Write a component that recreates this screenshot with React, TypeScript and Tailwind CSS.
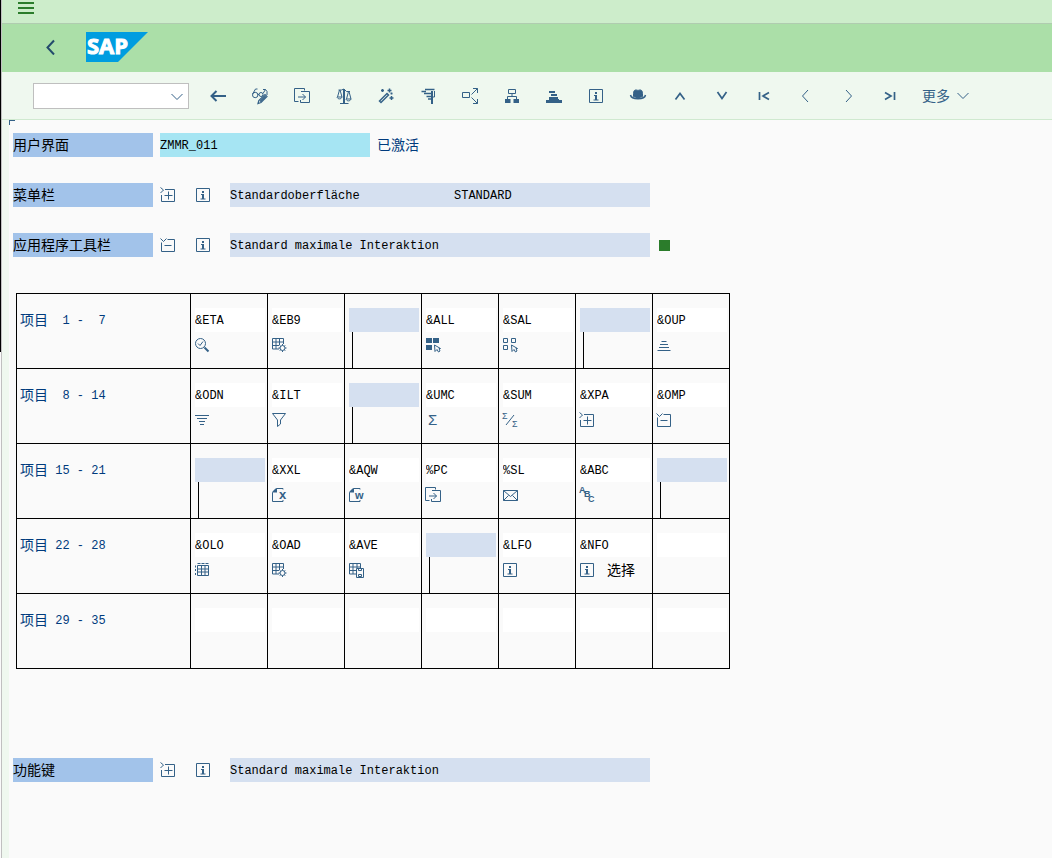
import React from 'react';

type IconName = keyof typeof icons;

// All icons are drawn on a 16x16 grid
const icons = {
  back: <path d="M16 8H1.5M6.5 3 1.5 8l5 5" strokeWidth="2" />,
  display: (
    <>
      <circle cx="3.2" cy="7" r="2.700" />
      <circle cx="9" cy="6.500" r="2" />
      <path d="M.6 6 3.500 1h2M5.900 6.500h1.200M11 5.500l2.500-4M13.500 1.500h-2.500M15 7V3.500l-1.500-2" />
      <path d="m6 15.500.8-3L13 6.500l2 2-6 6zM8 13.500 14 7.500" strokeWidth="1.200" />
    </>
  ),
  transfer: <path d="M4.500 13.500h-4V.5h10v2M7 3.500h8.500v11h-9v-2.500M4 9h7.500M8.500 6l3 3-3 3" />,
  scales: (
    <>
      <path d="M8 1v14" strokeWidth="2" />
      <path d="M4 15.500h8.500M2.500 2h3L8 1l2.500 2.500H14M3.500 2 1.500 9h4.500L4 2M12.500 3.500 10.500 11H15l-2-7.500" />
      <path d="M1 9c.5 2.500 4.500 2.500 5 0M10 11c.5 2.500 4.500 2.500 5 0" />
    </>
  ),
  wand: (
    <>
      <path d="m1.500 13 7.500-7.500 1.500 1.500L3 14.500z" strokeWidth="1.500" />
      <path d="M4.500 1v3M3 2.500h3M11.500.5v4M9.500 2.500h4M13.500 8v4M11.500 10h4M13.500 4.500v2M12.500 5.500h2" strokeWidth="1.500" />
    </>
  ),
  indent: (
    <>
      <path d="M5 1.500h9.500M1.500 3.500H6M4 5.500h9M6.500 8.500h6M8 11h4" strokeWidth="1.700" />
      <path d="M12 3v13" strokeWidth="2" />
      <path d="M14.500 3v6H12" />
    </>
  ),
  share: <path d="M.5 4.500h7v5h-7zM9.500 6.500l6-6M11 .5h4.500V5M9.500 9.500l6 6M11 15.500h4.500V11" />,
  hierarchy: (
    <>
      <path d="M4.500 1.500h7v4h-7zM8 6v3M3.500 11V8.500h9V11" />
      <path d="M1 11h5.500v4H1zM9.500 11H15v4H9.500z" fill="currentColor" stroke="none" />
    </>
  ),
  stack: (
    <path
      d="M3 3h6v2H3zM5 6h6v2H5zM3 9h9v2H3zM0 12h3v-1h10v1h3v3H0z"
      fill="currentColor"
      stroke="none"
    />
  ),
  info: (
    <>
      <path d="M1.500 1.500h13v13h-13z" />
      <path d="M7 4h2v2H7zM6 7h3v4.500h1.500v1H5.500v-1H7V8H6z" fill="currentColor" stroke="none" />
    </>
  ),
  hat: (
    <>
      <path d="M3.500 8.500V5.500C3.500 1.500 6 1.500 8 2.500c2-1 4.500-1 4.500 3v3c-3 1.500-6 1.500-9 0z" fill="currentColor" />
      <path d="M.5 7c1 5 14 5 15 0" strokeWidth="1.500" />
    </>
  ),
  up: <path d="m3.500 11.500 4.500-6 4.500 6" strokeWidth="1.700" />,
  down: <path d="m3.500 4 4.500 6.500L12.500 4" strokeWidth="1.700" />,
  first: <path d="M3.500 4v8M13 4.500 7 8l6 3.500" strokeWidth="1.700" />,
  prev: <path d="M10 2 4.500 8l5.500 6" />,
  next: <path d="m6 2 5.500 6L6 14" />,
  last: <path d="M12.500 4v8M3 4.500 9 8l-6 3.500" strokeWidth="1.700" />,
  expand: <path d="m.5.5 3 2.500-3 3M5 2.500h9.500v12h-13V8M8.500 4.500v8M4.500 8.500h8" />,
  collapse: <path d="m.5 1.500 3 3 3-3M7.500 2.500h7v12h-13V5.500M4.500 8.500h7" />,
  detail: (
    <>
      <circle cx="6.500" cy="6.500" r="5" />
      <path d="m4 6.500 2 2 3-4" />
      <path d="m10.500 10.500 4 4" strokeWidth="2" />
    </>
  ),
  gridSettings: (
    <>
      <path d="M1.500 12V1.500h11V7M1.500 5h11M1.500 8.500H8M1.500 12H8M5 1.500V12M8.500 1.500V8" />
      <circle cx="11.500" cy="11" r="2.500" />
      <path d="M11.500 7v1.500M11.500 13.500V15M7.500 11H9M14 11h1.500M8.800 8.300l1 1M13.200 12.700l1 1M14.200 8.300l-1 1M9.800 12.700l-1 1" />
    </>
  ),
  selectAll: (
    <>
      <path d="M1 1h6v5H1zM8 1h6v5H8zM1 8h6v5H1z" fill="currentColor" stroke="none" />
      <path d="m9.500 8 .5 6.500 2-2 1.500 2.500 1.500-1-1-2.500h1.500z" />
    </>
  ),
  deselectAll: (
    <>
      <path d="M1.500 1.500h4v4h-4zM9.500 1.500h4v4h-4zM1.500 8.500h4v4h-4z" />
      <path d="m9.500 8 .5 6.500 2-2 1.500 2.500 1.500-1-1-2.500h1.500z" />
    </>
  ),
  sortUp: <path d="M5.500 4.500h5M4 7.500h8M3 10.500h10M1.500 13.500h13" />,
  sortDown: <path d="M1 3.500h14M3 6.500h10M5 9.500h6M6 12.500h4" />,
  filter: <path d="M1.500 1.500h13l-5 6.500v4l-3 2.500V8z" />,
  sum: (
    <text x="3" y="13" fontSize="15" fill="currentColor" stroke="none">
      Σ
    </text>
  ),
  subtotal: (
    <>
      <text x="0" y="7" fontSize="9" fill="currentColor" stroke="none">Σ</text>
      <text x="10" y="15" fontSize="9" fill="currentColor" stroke="none">Σ</text>
      <path d="m4 13 8-10" />
    </>
  ),
  excel: (
    <>
      <path d="M12 2.500V1.500H5.500l-4 4v9H12V13" />
      <path d="M1.500 5.500v-1l3-3H6v4z" fill="currentColor" stroke="none" />
      <text x="8" y="12" fontSize="13" fontWeight="bold" fill="currentColor" stroke="none">x</text>
    </>
  ),
  word: (
    <>
      <path d="M12 2.500V1.500H5.500l-4 4v9H12V13" />
      <path d="M1.500 5.500v-1l3-3H6v4z" fill="currentColor" stroke="none" />
      <text x="7" y="12" fontSize="11" fontWeight="bold" fill="currentColor" stroke="none">w</text>
    </>
  ),
  mail: <path d="M1.500 3.500h14v10h-14zM1.500 3.500l7 6 7-6M1.500 13.500l5-5M15.500 13.500l-5-5" />,
  abc: (
    <g fill="currentColor" stroke="none" fontSize="9" fontWeight="bold">
      <text x="0" y="6">A</text>
      <text x="5" y="10">B</text>
      <text x="9" y="15">C</text>
    </g>
  ),
  layout: (
    <>
      <path d="M3.500 3.500h11v10h-11zM3.500 7h11M3.500 10h11M7.500 3v11M11 3v11" />
      <path d="M3.500 1.500h3M7.500 1.500h3M11.500 1.500h3M1.500 3.500v2M1.500 7v2M1.500 11v2" />
    </>
  ),
  saveLayout: (
    <>
      <path d="M8 12H1.500V1.500h11V6M1.500 5h11M1.500 8.500H8M5 1.500V12M9 1.500V6" />
      <path d="M8.500 6.500h7v9h-7zM10.500 6.500v2h3v-2M10.500 12.500h3v2h-3z" />
    </>
  ),
};

const Icon: React.FC<{ name: IconName }> = ({ name }) => (
  <svg
    viewBox="0 0 16 16"
    className="h-4 w-4 shrink-0 overflow-visible font-['Liberation_Sans',sans-serif]"
    fill="none"
    stroke="currentColor"
    aria-hidden="true"
  >
    {icons[name]}
  </svg>
);

const toolbar: { icon: IconName; label: string }[] = [
  { icon: 'back', label: '返回' },
  { icon: 'display', label: '显示/更改' },
  { icon: 'transfer', label: '其他对象' },
  { icon: 'scales', label: '检查' },
  { icon: 'wand', label: '激活' },
  { icon: 'indent', label: '测试' },
  { icon: 'share', label: '使用清单' },
  { icon: 'hierarchy', label: '对象列表' },
  { icon: 'stack', label: '导航堆栈' },
  { icon: 'info', label: '信息' },
  { icon: 'hat', label: '属性' },
  { icon: 'up', label: '向上' },
  { icon: 'down', label: '向下' },
  { icon: 'first', label: '第一个' },
  { icon: 'prev', label: '上一个' },
  { icon: 'next', label: '下一个' },
  { icon: 'last', label: '最后一个' },
];

interface Item {
  code?: string;
  icon?: IconName;
  text?: string;
  separator?: boolean;
}

const sep: Item = { separator: true };

const rows: { range: string; items: Item[] }[] = [
  {
    range: '  1 -  7',
    items: [
      { code: '&ETA', icon: 'detail' },
      { code: '&EB9', icon: 'gridSettings' },
      sep,
      { code: '&ALL', icon: 'selectAll' },
      { code: '&SAL', icon: 'deselectAll' },
      sep,
      { code: '&OUP', icon: 'sortUp' },
    ],
  },
  {
    range: '  8 - 14',
    items: [
      { code: '&ODN', icon: 'sortDown' },
      { code: '&ILT', icon: 'filter' },
      sep,
      { code: '&UMC', icon: 'sum' },
      { code: '&SUM', icon: 'subtotal' },
      { code: '&XPA', icon: 'expand' },
      { code: '&OMP', icon: 'collapse' },
    ],
  },
  {
    range: ' 15 - 21',
    items: [
      sep,
      { code: '&XXL', icon: 'excel' },
      { code: '&AQW', icon: 'word' },
      { code: '%PC', icon: 'transfer' },
      { code: '%SL', icon: 'mail' },
      { code: '&ABC', icon: 'abc' },
      sep,
    ],
  },
  {
    range: ' 22 - 28',
    items: [
      { code: '&OLO', icon: 'layout' },
      { code: '&OAD', icon: 'gridSettings' },
      { code: '&AVE', icon: 'saveLayout' },
      sep,
      { code: '&LFO', icon: 'info' },
      { code: '&NFO', icon: 'info', text: '选择' },
      {},
    ],
  },
  { range: ' 29 - 35', items: [{}, {}, {}, {}, {}, {}, {}] },
];

interface SectionRowProps {
  label: string;
  toggle: IconName;
  value: string;
  status?: string;
  active?: boolean;
}

const SectionRow: React.FC<SectionRowProps> = ({ label, toggle, value, status, active }) => (
  <div className="flex h-6 items-center">
    <span className="h-6 w-[140px] bg-[#a2c3ea] text-black">{label}</span>
    <button type="button" aria-label={`展开 ${label}`} className="flex w-[35px] pl-[7px]">
      <Icon name={toggle} />
    </button>
    <button type="button" aria-label={`信息 ${label}`} className="flex w-[35px] pl-[7px]">
      <Icon name="info" />
    </button>
    <div className="ml-[7px] flex h-6 w-[420px] bg-[#d5e0f0] font-['Liberation_Mono',monospace] text-xs leading-[26px] text-black">
      <span className="w-[224px]">{value}</span>
      {status && <span>{status}</span>}
    </div>
    {active && <span className="ml-[9px] h-[11px] w-[11px] bg-[#2b7c2b]" />}
  </div>
);

const ItemCell: React.FC<{ item: Item; label: string }> = ({ item, label }) => {
  if (item.separator) {
    return (
      <>
        <div className="h-6 w-[70px] bg-[#d5e0f0]" />
        <div className="ml-[3px] h-9 w-px bg-black" />
      </>
    );
  }
  return (
    <>
      <input
        aria-label={label}
        defaultValue={item.code}
        className="block h-6 w-[70px] bg-white pt-[2px] font-['Liberation_Mono',monospace] text-xs text-black outline-none"
      />
      <div className="-ml-px flex h-9 items-start gap-3 pt-px">
        {item.icon && (
          <span className="flex h-6 items-center">
            <Icon name={item.icon} />
          </span>
        )}
        {item.text && <span className="text-black">{item.text}</span>}
      </div>
    </>
  );
};

const App: React.FC = () => {
  return (
    <div className="flex min-h-screen bg-[#fafafa] font-['Liberation_Sans','Noto_Sans_CJK_SC',sans-serif] text-sm leading-6 text-[#346187]">
      {/* Window edge */}
      <div className="w-px shrink-0 bg-[#fafafa]">
        <div className="h-[352px] bg-black" />
      </div>

      <div className="flex min-w-0 flex-1 flex-col border-l border-[#c0c0c0]">
        <div className="flex h-6 border-b border-[#b0ccb0] bg-[#cdedcb] pl-4">
          <button type="button" aria-label="菜单" className="h-4 text-[#2b7c2b]">
            <svg viewBox="0 0 16 16" className="h-4 w-4" fill="none" stroke="currentColor" strokeWidth="2">
              <path d="M0 3h16M0 8h16M0 13h16" />
            </svg>
          </button>
        </div>

        <header className="flex h-12 items-center bg-[#abdfa8] pb-[2px] pl-10">
          <button type="button" aria-label="返回" className="text-[#234b6c]">
            <svg viewBox="0 0 16 16" className="h-4 w-4" fill="none" stroke="currentColor" strokeWidth="2">
              <path d="M12 1.500 5.500 8.500l6.500 7" />
            </svg>
          </button>
          <svg
            viewBox="0 0 62 30"
            className="ml-7 h-[30px] w-[62px] overflow-visible"
            role="img"
            aria-label="SAP"
          >
            <path d="M0 0h62L32 30H0z" fill="#009de0" />
            <text
              x="1"
              y="22"
              fill="#fff"
              stroke="#fff"
              className="font-['Open_Sans',sans-serif] text-[22px] font-bold"
            >
              SAP
            </text>
          </svg>
        </header>

        <div className="flex h-12 items-center border-b border-[#cfe9cf] bg-[#eff8ef] pl-[31px]">
          <div className="relative mr-2">
            <select
              aria-label="命令"
              className="block h-[26px] w-[156px] appearance-none border border-[#bfbfbf] bg-white outline-none"
            >
              <option value="" />
            </select>
            <svg
              viewBox="0 0 12 8"
              className="pointer-events-none absolute top-[10px] right-[6px] h-2 w-3"
              fill="none"
              stroke="currentColor"
            >
              <path d="m.5 1 5.500 5.500L11.500 1" />
            </svg>
          </div>
          {toolbar.map((item) => (
            <button
              key={item.icon}
              type="button"
              aria-label={item.label}
              className="flex h-8 w-[42px] shrink-0 items-center justify-center"
            >
              <Icon name={item.icon} />
            </button>
          ))}
          <button type="button" className="ml-[11px] flex shrink-0 items-center gap-[7px]">
            更多
            <svg viewBox="0 0 12 8" className="h-2 w-3" fill="none" stroke="currentColor">
              <path d="m.5 1 5.500 5.500L11.500 1" />
            </svg>
          </button>
        </div>

        <main className="relative flex-1 border-l-[7px] border-[#eff8ef] pt-[13px] pl-1">
          <span className="absolute top-0 left-0 h-[5px] w-[6px] border-t border-l border-[#346187]" />

          <div className="flex h-6">
            <label htmlFor="interface" className="w-[140px] bg-[#a2c3ea] text-black">
              用户界面
            </label>
            <input
              id="interface"
              defaultValue="ZMMR_011"
              readOnly
              className="mx-[7px] h-6 w-[210px] bg-[#a6e5f3] pt-[2px] font-['Liberation_Mono',monospace] text-xs text-black outline-none"
            />
            <span className="text-[#003b7d]">已激活</span>
          </div>

          <div className="mt-[26px] flex flex-col gap-[26px]">
            <SectionRow label="菜单栏" toggle="expand" value="Standardoberfläche" status="STANDARD" />
            <SectionRow label="应用程序工具栏" toggle="collapse" value="Standard maximale Interaktion" active />
          </div>

          <table className="mt-9 ml-[3px] table-fixed border-separate border-spacing-0 border-r border-b border-black">
            <colgroup>
              <col className="w-[174px]" />
              <col span={7} className="w-[77px]" />
            </colgroup>
            <tbody>
              {rows.map((row) => (
                <tr key={row.range}>
                  <th
                    scope="row"
                    className="w-[174px] border-t border-l border-black pt-[14px] pl-[3px] text-left align-top font-normal text-[#003b7d]"
                  >
                    <span className="flex">
                      项目
                      <span className="font-['Liberation_Mono',monospace] text-xs leading-[26px] whitespace-pre">
                        {row.range}
                      </span>
                    </span>
                  </th>
                  {row.items.map((item, index) => (
                    <td key={index} className="w-[77px] border-t border-l border-black pt-[14px] pl-1 align-top">
                      <ItemCell item={item} label={`项目${row.range} (${index + 1})`} />
                    </td>
                  ))}
                </tr>
              ))}
            </tbody>
          </table>

          <div className="mt-[89px]">
            <SectionRow label="功能键" toggle="expand" value="Standard maximale Interaktion" />
          </div>
        </main>
      </div>
    </div>
  );
};

export default App;
